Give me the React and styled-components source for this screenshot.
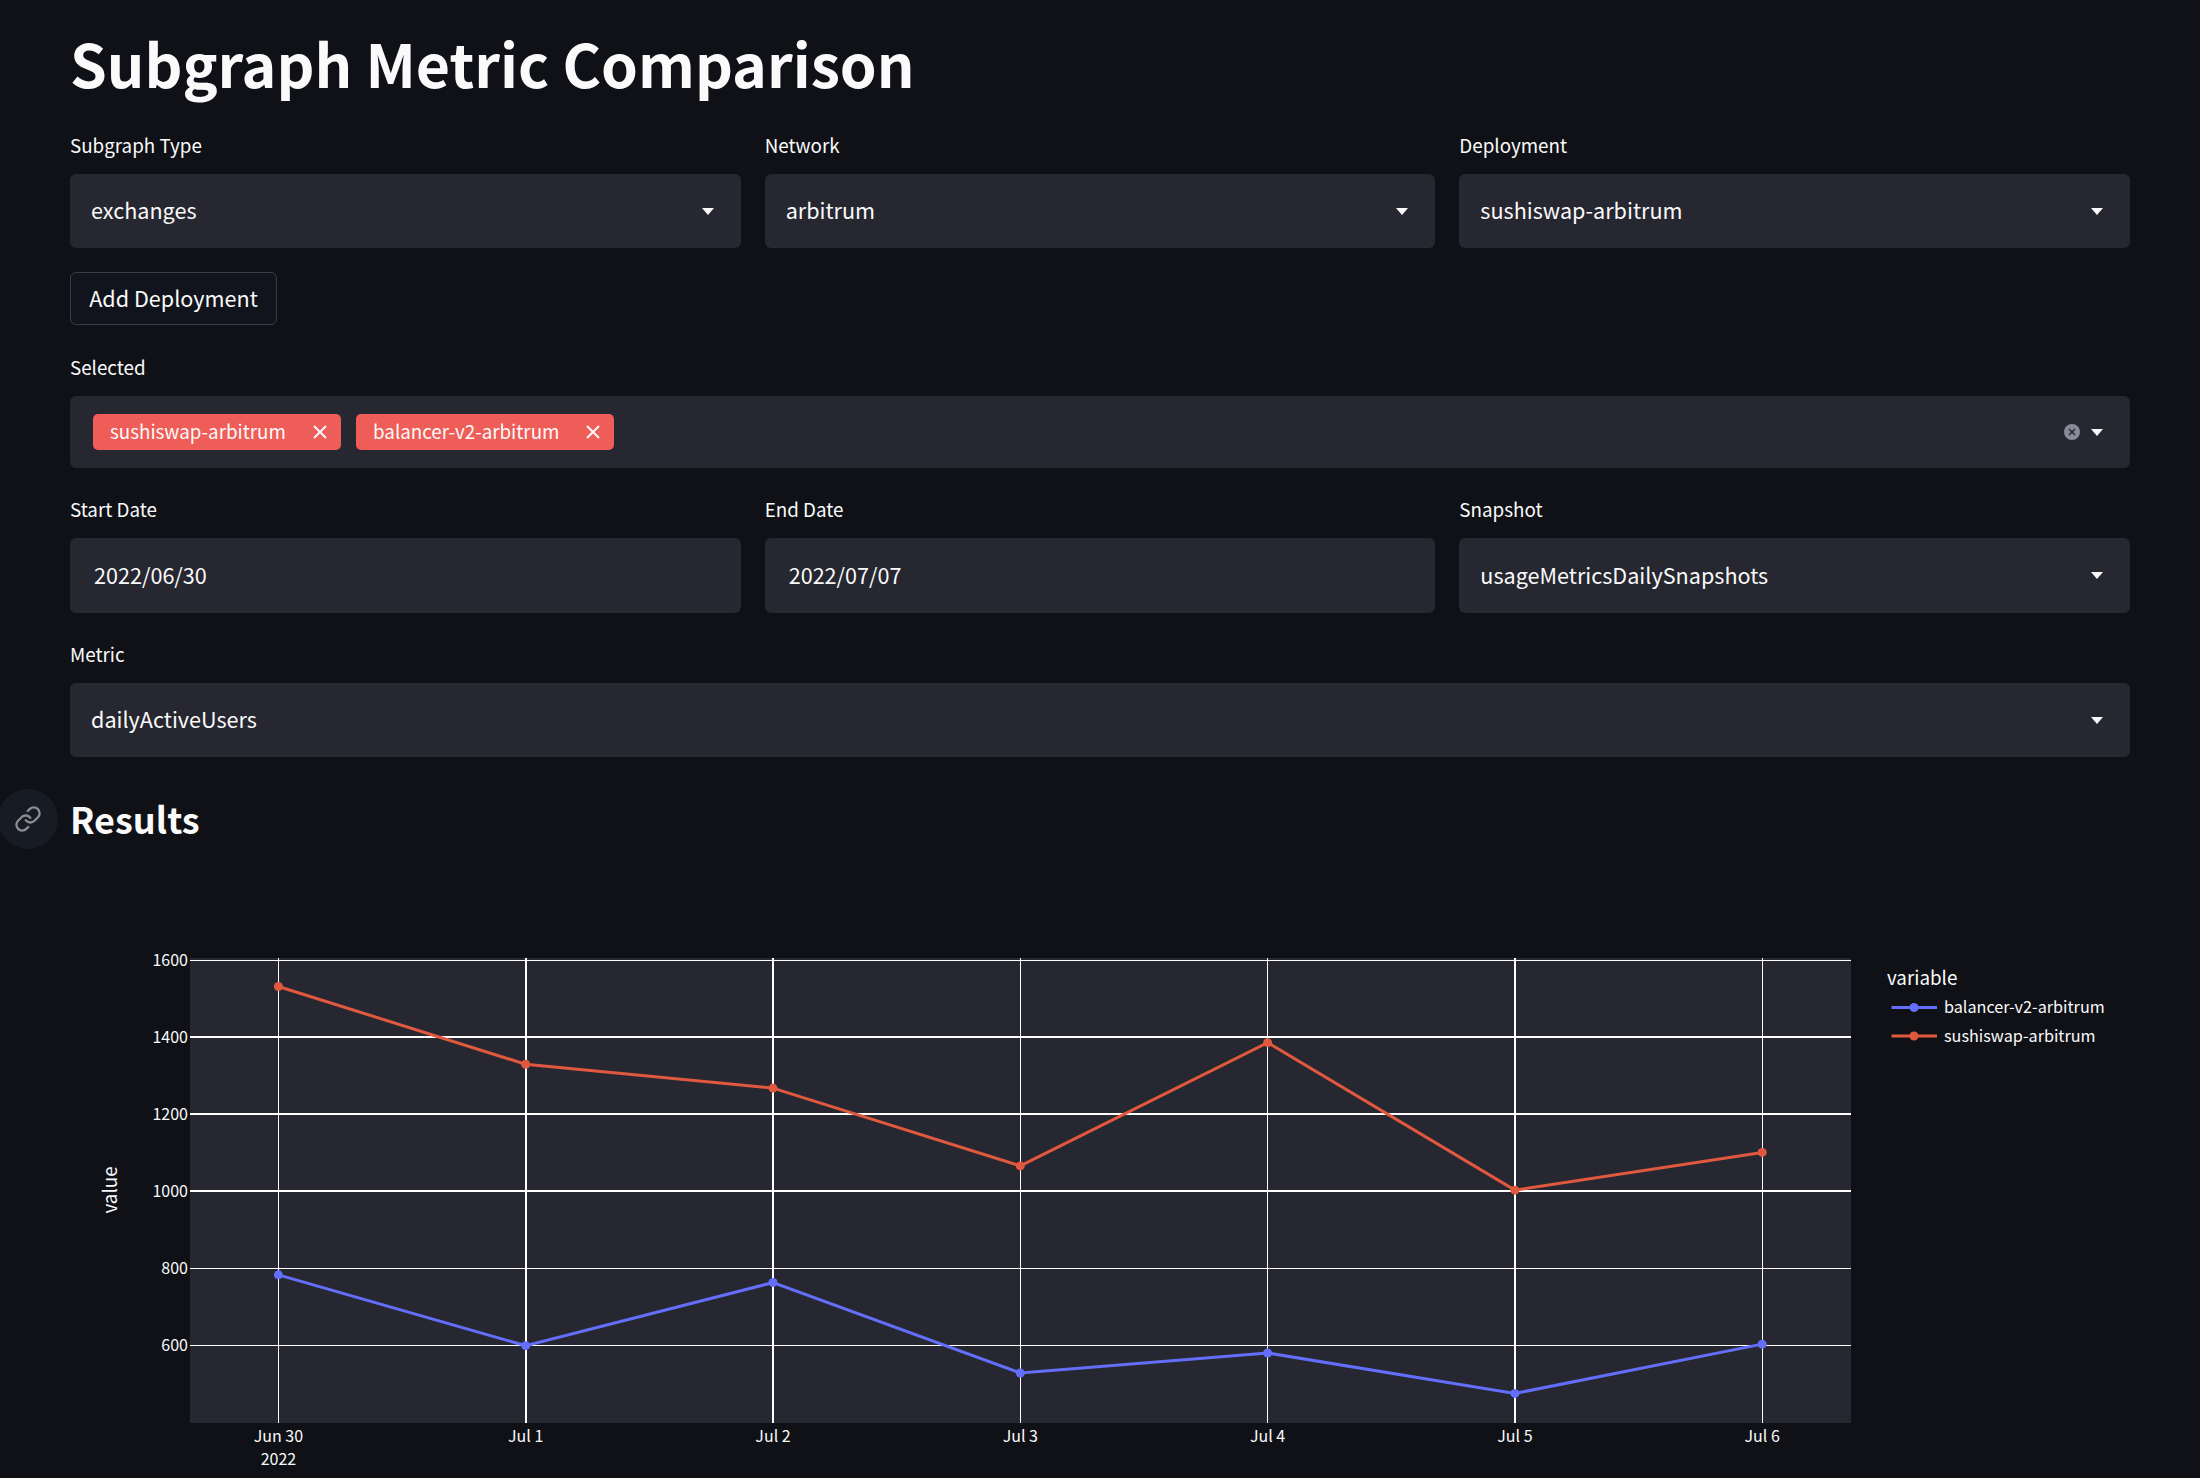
import React from "react";
import styled, { createGlobalStyle } from "styled-components";

const GlobalStyle = createGlobalStyle`
  html, body {
    margin: 0;
    padding: 0;
    background: #0f1117;
  }
  body {
    font-family: "Noto Sans CJK SC", "Noto Sans", sans-serif;
    color: #fafafa;
  }
`

const Page = styled.div`
  width: 2200px;
  height: 1478px;
  overflow: hidden;
  box-sizing: border-box;
  padding: 0 70px;
  display: flex;
  flex-direction: column;
`

const Title = styled.h1`
  margin: 24px 0 0;
  height: 80px;
  line-height: 78px;
  font-size: 59px;
  font-weight: 700;
  color: #fafafa;
`

const Row = styled.div`
  display: grid;
  grid-template-columns: repeat(3, 1fr);
  column-gap: 24px;
  margin-top: ${props => props.top || 0}px;
`

const Field = styled.div`
  display: flex;
  flex-direction: column;
  min-width: 0;
`

const Label = styled.label`
  height: 30px;
  line-height: 28px;
  font-size: 18.8px;
  color: #fafafa;
  margin-bottom: 13px;
`

const SelectBox = styled.div`
  height: ${props => props.height || 74}px;
  box-sizing: border-box;
  background: #262730;
  border-radius: 6px;
  display: flex;
  align-items: center;
  padding: 0 27px 0 21px;
  font-size: 21.6px;
  color: #fafafa;
`

const InputBox = styled(SelectBox)`
  padding-left: 24px;
`

const Value = styled.span`
  flex: 1;
  margin-top: -3px;
`

const Caret = styled.span`
  width: 0;
  height: 0;
  border-left: 6px solid transparent;
  border-right: 6px solid transparent;
  border-top: 7px solid #fafafa;
`

const AddButton = styled.button`
  display: block;
  width: 207px;
  height: 53px;
  margin-top: 24px;
  padding: 0 0 3px;
  background: #11141c;
  border: 1px solid #3a3d48;
  border-radius: 6px;
  color: #fafafa;
  font-family: inherit;
  font-size: 21.6px;
`

const MultiBox = styled(SelectBox)`
  padding-left: 23px;
  gap: 15px;
`

const Tag = styled.span`
  height: 36px;
  box-sizing: border-box;
  display: inline-flex;
  align-items: center;
  justify-content: space-between;
  width: ${props => props.width}px;
  padding: 0 14px 0 17px;
  background: #ef5d58;
  border-radius: 5px;
  font-size: 18.8px;
  color: #fafafa;
`

const TagsEnd = styled.div`
  margin-left: auto;
  display: flex;
  align-items: center;
  gap: 11px;
`

const FullField = styled(Field)`
  margin-top: ${props => props.top || 0}px;
`

const Heading = styled.div`
  position: relative;
  margin-top: 37px;
  height: 50px;
  line-height: 48px;
  font-size: 36px;
  font-weight: 700;
  color: #fafafa;
`

const LinkBadge = styled.span`
  position: absolute;
  left: -72px;
  top: -5px;
  width: 60px;
  height: 60px;
  border-radius: 50%;
  background: #171b24;
  display: flex;
  align-items: center;
  justify-content: center;
`

const ChartWrap = styled.div`
  margin: 104px 0 0 -70px;
  height: 530px;
`

const TagClose = () => (
  <svg width="14" height="14" viewBox="0 0 14 14">
    <path d="M1 1 13 13M13 1 1 13" stroke="#fafafa" strokeWidth="2" fill="none" />
  </svg>
)

const ClearIcon = () => (
  <svg width="16" height="16" viewBox="0 0 16 16">
    <circle cx="8" cy="8" r="8" fill="#8a8b98" />
    <path d="M5 5 11 11M11 5 5 11" stroke="#262730" strokeWidth="1.5" fill="none" />
  </svg>
)

const LinkIcon = () => (
  <svg width="28" height="28" viewBox="0 0 24 24" fill="none" stroke="#8b8d92" strokeWidth="2" strokeLinecap="round" strokeLinejoin="round">
    <path d="M10 13a5 5 0 0 0 7.54.54l3-3a5 5 0 0 0-7.07-7.07l-1.72 1.71" />
    <path d="M14 11a5 5 0 0 0-7.54-.54l-3 3a5 5 0 0 0 7.07 7.07l1.71-1.71" />
  </svg>
)

const X0 = 278.4
const XSTEP = 247.3
const xAt = i => X0 + XSTEP * i
const yAt = v => 960.3 + (1600 - v) * 0.385

const xLabels = ['Jun 30', 'Jul 1', 'Jul 2', 'Jul 3', 'Jul 4', 'Jul 5', 'Jul 6']
const yTicks = [1600, 1400, 1200, 1000, 800, 600]
// gridlines land on different pixel widths in the screenshot
const thickY = { 1400: 2, 1200: 2, 1000: 2 }
const thickX = { 1: 2, 2: 2, 5: 2 }

const blue = [783, 599, 763, 528, 580, 475, 603]
const orange = [1532, 1330, 1268, 1066, 1386, 1003, 1101]

const Series = ({ values, color }) => {
  const points = values.map((v, i) => `${xAt(i)},${yAt(v)}`).join(' ')
  return (
    <g>
      <polyline points={points} fill="none" stroke={color} strokeWidth="3" />
      {values.map((v, i) => <circle key={i} cx={xAt(i)} cy={yAt(v)} r="4.5" fill={color} />)}
    </g>
  )
}

const Chart = () => (
  <svg width="2200" height="530" viewBox="0 948 2200 530" fontFamily="'Noto Sans CJK SC', sans-serif" fill="#fafafa">
    <rect x="190" y="958" width="1661" height="465" fill="#262730" />
    {yTicks.map(t => (
      <g key={t}>
        <line x1="190" x2="1851" y1={yAt(t)} y2={yAt(t)} stroke="#fff" strokeWidth={thickY[t] || 1} shapeRendering="crispEdges" />
        <text x="188" y={yAt(t) + 5.5} fontSize="16" textAnchor="end">{t}</text>
      </g>
    ))}
    {xLabels.map((l, i) => (
      <g key={l}>
        <line x1={xAt(i)} x2={xAt(i)} y1="958" y2="1423" stroke="#fff" strokeWidth={thickX[i] || 1} shapeRendering="crispEdges" />
        <text x={xAt(i)} y="1442" fontSize="16" textAnchor="middle">{l}</text>
      </g>
    ))}
    <text x={xAt(0)} y="1465" fontSize="16" textAnchor="middle">2022</text>
    <text transform="rotate(-90 117 1190)" x="117" y="1190" fontSize="18.8" textAnchor="middle">value</text>
    <Series values={blue} color="#636efa" />
    <Series values={orange} color="#e0593f" />
    <text x="1887" y="984.5" fontSize="18.8">variable</text>
    <line x1="1891.5" x2="1937" y1="1007.5" y2="1007.5" stroke="#636efa" strokeWidth="3" />
    <circle cx="1914" cy="1007.5" r="4.5" fill="#636efa" />
    <text x="1944" y="1013" fontSize="16.2">balancer-v2-arbitrum</text>
    <line x1="1891.5" x2="1937" y1="1036" y2="1036" stroke="#e0593f" strokeWidth="3" />
    <circle cx="1914" cy="1036" r="4.5" fill="#e0593f" />
    <text x="1944" y="1042" fontSize="16.2">sushiswap-arbitrum</text>
  </svg>
)

const App = () => (
  <Page>
    <GlobalStyle />
    <Title>Subgraph Metric Comparison</Title>
    <Row top={27}>
      <Field>
        <Label>Subgraph Type</Label>
        <SelectBox><Value>exchanges</Value><Caret /></SelectBox>
      </Field>
      <Field>
        <Label>Network</Label>
        <SelectBox><Value>arbitrum</Value><Caret /></SelectBox>
      </Field>
      <Field>
        <Label>Deployment</Label>
        <SelectBox><Value>sushiswap-arbitrum</Value><Caret /></SelectBox>
      </Field>
    </Row>
    <div><AddButton>Add Deployment</AddButton></div>
    <FullField top={28}>
      <Label>Selected</Label>
      <MultiBox height={72}>
        <Tag width={248}><Value>sushiswap-arbitrum</Value><TagClose /></Tag>
        <Tag width={258}><Value>balancer-v2-arbitrum</Value><TagClose /></Tag>
        <TagsEnd><ClearIcon /><Caret /></TagsEnd>
      </MultiBox>
    </FullField>
    <Row top={27}>
      <Field>
        <Label>Start Date</Label>
        <InputBox height={75}><Value>2022/06/30</Value></InputBox>
      </Field>
      <Field>
        <Label>End Date</Label>
        <InputBox height={75}><Value>2022/07/07</Value></InputBox>
      </Field>
      <Field>
        <Label>Snapshot</Label>
        <SelectBox height={75}><Value>usageMetricsDailySnapshots</Value><Caret /></SelectBox>
      </Field>
    </Row>
    <FullField top={27}>
      <Label>Metric</Label>
      <SelectBox><Value>dailyActiveUsers</Value><Caret /></SelectBox>
    </FullField>
    <Heading>
      <LinkBadge><LinkIcon /></LinkBadge>
      Results
    </Heading>
    <ChartWrap><Chart /></ChartWrap>
  </Page>
)

export default App
